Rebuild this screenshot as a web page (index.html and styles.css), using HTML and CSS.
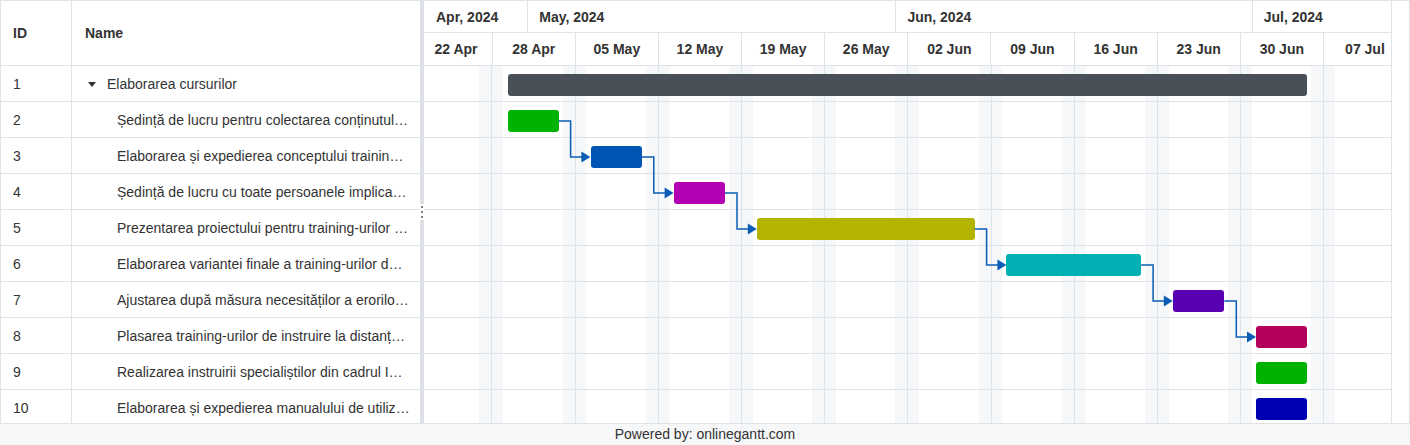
FILE: index.html
```html
<!DOCTYPE html>
<html lang="ro">
<head>
    <meta charset="UTF-8">
    <meta name="viewport" content="width=device-width, initial-scale=1.0">
    <title>Elaborarea cursurilor - Gantt</title>
    <link rel="stylesheet" href="styles.css">
</head>
<body>
<div class="gantt">
    <div class="gantt-main">
        <!-- task list -->
        <div class="grid">
            <div class="grid-head">
                <div class="cell-id">ID</div>
                <div class="cell-name">Name</div>
            </div>
            <div class="grid-row">
                <div class="cell-id">1</div>
                <div class="cell-name parent"><i class="toggle"></i><span>Elaborarea cursurilor</span></div>
            </div>
            <div class="grid-row">
                <div class="cell-id">2</div>
                <div class="cell-name child"><span>Ședință de lucru pentru colectarea conținutului training-urilor</span></div>
            </div>
            <div class="grid-row">
                <div class="cell-id">3</div>
                <div class="cell-name child"><span>Elaborarea și expedierea conceptului training-urilor</span></div>
            </div>
            <div class="grid-row">
                <div class="cell-id">4</div>
                <div class="cell-name child"><span>Ședință de lucru cu toate persoanele implicate în proiect</span></div>
            </div>
            <div class="grid-row">
                <div class="cell-id">5</div>
                <div class="cell-name child"><span>Prezentarea proiectului pentru training-urilor de instruire</span></div>
            </div>
            <div class="grid-row">
                <div class="cell-id">6</div>
                <div class="cell-name child"><span>Elaborarea variantei finale a training-urilor de instruire</span></div>
            </div>
            <div class="grid-row">
                <div class="cell-id">7</div>
                <div class="cell-name child"><span>Ajustarea după măsura necesităților a erorilor depistate</span></div>
            </div>
            <div class="grid-row">
                <div class="cell-id">8</div>
                <div class="cell-name child"><span>Plasarea training-urilor de instruire la distanță pe platformă</span></div>
            </div>
            <div class="grid-row">
                <div class="cell-id">9</div>
                <div class="cell-name child"><span>Realizarea instruirii specialiștilor din cadrul Instituției</span></div>
            </div>
            <div class="grid-row">
                <div class="cell-id">10</div>
                <div class="cell-name child"><span>Elaborarea și expedierea manualului de utilizare</span></div>
            </div>
        </div>

        <div class="splitter"><span class="handle"><i></i><i></i><i></i></span></div>

        <!-- timeline, one grid column per day starting Mon 22 Apr -->
        <div class="chart">
            <div class="timeline">
                <div class="months">
                    <div class="month" style="grid-column: span 9">Apr, 2024</div>
                    <div class="month" style="grid-column: span 31">May, 2024</div>
                    <div class="month" style="grid-column: span 30">Jun, 2024</div>
                    <div class="month" style="grid-column: span 13">Jul, 2024</div>
                </div>
                <div class="weeks">
                    <div class="week" style="grid-column: span 6">22 Apr</div>
                    <div class="week">28 Apr</div>
                    <div class="week">05 May</div>
                    <div class="week">12 May</div>
                    <div class="week">19 May</div>
                    <div class="week">26 May</div>
                    <div class="week">02 Jun</div>
                    <div class="week">09 Jun</div>
                    <div class="week">16 Jun</div>
                    <div class="week">23 Jun</div>
                    <div class="week">30 Jun</div>
                    <div class="week">07 Jul</div>
                </div>

                <div class="chart-body">
                    <div class="bar-row"><div class="bar summary" style="grid-column: 8 / span 68"></div></div>
                    <div class="bar-row"><div class="bar green" style="grid-column: 8 / span 5"></div></div>
                    <div class="bar-row"><div class="bar blue" style="grid-column: 15 / span 5"></div></div>
                    <div class="bar-row"><div class="bar magenta" style="grid-column: 22 / span 5"></div></div>
                    <div class="bar-row"><div class="bar olive" style="grid-column: 29 / span 19"></div></div>
                    <div class="bar-row"><div class="bar teal" style="grid-column: 50 / span 12"></div></div>
                    <div class="bar-row"><div class="bar purple" style="grid-column: 64 / span 5"></div></div>
                    <div class="bar-row"><div class="bar crimson" style="grid-column: 71 / span 5"></div></div>
                    <div class="bar-row"><div class="bar green" style="grid-column: 71 / span 5"></div></div>
                    <div class="bar-row"><div class="bar navy" style="grid-column: 71 / span 5"></div></div>

                    <!-- finish-to-start links -->
                    <svg class="links" width="987" height="360" viewBox="0 0 987 360">
                        <g fill="none" stroke="#0b5cb5" stroke-width="1.5">
                            <path d="M138.6 55 H150.6 V91 H162"/>
                            <path d="M221.8 91 H233.8 V127 H245"/>
                            <path d="M305 127 H317 V163 H328"/>
                            <path d="M554.6 163 H566.6 V199 H578"/>
                            <path d="M721.1 199 H733.1 V235 H744"/>
                            <path d="M804.3 235 H816.3 V271 H827"/>
                        </g>
                        <g fill="#0b5cb5">
                            <polygon points="161.4,85.5 170.4,91 161.4,96.5"/>
                            <polygon points="244.6,121.5 253.6,127 244.6,132.5"/>
                            <polygon points="327.8,157.5 336.8,163 327.8,168.5"/>
                            <polygon points="577.4,193.5 586.4,199 577.4,204.5"/>
                            <polygon points="743.8,229.5 752.8,235 743.8,240.5"/>
                            <polygon points="827,265.5 836,271 827,276.5"/>
                        </g>
                    </svg>
                </div>
            </div>
        </div>

        <div class="gutter"></div>
    </div>

    <div class="footer">Powered by: onlinegantt.com</div>
</div>
</body>
</html>
```

FILE: styles.css
```css
* {
    box-sizing: border-box;
}
:root {
    --day: 11.8857px;
    --line: #dfe2e6;
}
body {
    margin: 0;
    font-family: "Liberation Sans", Arial, sans-serif;
    font-size: 14px;
    color: #333;
    background: #fff;
}
.gantt {
    width: 1410px;
    height: 445px;
    display: flex;
    flex-direction: column;
}
.gantt-main {
    height: 423px;
    display: flex;
    border: 1px solid var(--line);
    border-bottom: none;
    overflow: hidden;
}

/* task list */
.grid {
    width: 419px;
    flex: none;
}
.grid-head {
    height: 65px;
    display: flex;
    font-weight: bold;
    border-bottom: 1px solid var(--line);
}
.grid-row {
    height: 36px;
    display: flex;
    border-bottom: 1px solid var(--line);
}
.cell-id {
    width: 71px;
    flex: none;
    display: flex;
    align-items: center;
    padding-left: 12px;
    border-right: 1px solid var(--line);
}
.cell-name {
    flex: 1;
    min-width: 0;
    display: flex;
    align-items: center;
    padding: 0 10px 0 13px;
}
.cell-name span {
    overflow: hidden;
    text-overflow: ellipsis;
    white-space: nowrap;
}
.cell-name.child {
    padding-left: 45px;
}
.toggle {
    flex: none;
    width: 0;
    height: 0;
    margin: 1px 11px 0 3px;
    border-left: 4.5px solid transparent;
    border-right: 4.5px solid transparent;
    border-top: 5px solid #333;
}

/* splitter between list and chart */
.splitter {
    width: 4px;
    flex: none;
    background: #dcdfe3;
    display: flex;
    align-items: center;
    justify-content: center;
}
.handle {
    display: flex;
    flex-direction: column;
    align-items: center;
    gap: 2.7px;
    padding: 2px 0;
    width: 4px;
    background: #fff;
}
.handle i {
    width: 2px;
    height: 2px;
    border-radius: 50%;
    background: #555;
}

/* timeline */
.chart {
    width: 968px;
    flex: none;
    overflow: hidden;
    border-right: 1px solid var(--line);
}
.timeline {
    width: calc(var(--day) * 83);
    margin-left: -3.6px;
}
.months,
.weeks,
.bar-row {
    display: grid;
    grid-template-columns: repeat(83, var(--day));
}
.months {
    height: 32px;
    border-bottom: 1px solid var(--line);
}
.weeks {
    height: 33px;
    border-bottom: 1px solid var(--line);
}
.month,
.week {
    display: flex;
    align-items: center;
    font-weight: bold;
    white-space: nowrap;
    border-left: 1px solid var(--line);
}
.month {
    padding-left: 11px;
}
.month:first-child {
    padding-left: 15.6px;
}
.week {
    grid-column: span 7;
    justify-content: center;
}
.month:first-child,
.week:first-child {
    border-left: none;
}

/* weekends shaded, a line at each Sunday */
.chart-body {
    position: relative;
    background: repeating-linear-gradient(to right,
        transparent 0 59.43px,
        #f6f7f9 59.43px 71.31px,
        var(--line) 71.31px 72.31px,
        #f6f7f9 72.31px 83.2px);
}
.bar-row {
    height: 36px;
    border-bottom: 1px solid var(--line);
}
.bar {
    height: 22px;
    margin: 8px 4px 0;
    border-radius: 3px;
}
.summary { background: #4a5058; }
.green { background: #00b300; }
.blue { background: #0055b3; }
.magenta { background: #b300b3; }
.olive { background: #b3b300; }
.teal { background: #00b0b3; }
.purple { background: #5900b3; }
.crimson { background: #b3005a; }
.navy { background: #0000b3; }

.links {
    position: absolute;
    top: 0;
    left: 0;
    pointer-events: none;
}

.gutter {
    flex: 1;
}

.footer {
    height: 22px;
    border-top: 1px solid var(--line);
    background: #f6f7f9;
    text-align: center;
    line-height: 21px;
}
```
